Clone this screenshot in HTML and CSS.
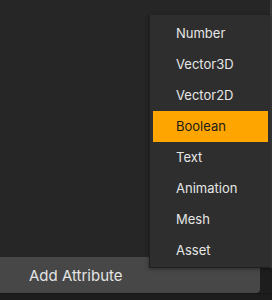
FILE: index.html
```html
<!DOCTYPE html>
<html lang="en">
<head>
<meta charset="UTF-8">
<meta name="viewport" content="width=device-width, initial-scale=1.0">
<title>Add Attribute</title>
<link rel="stylesheet" href="styles.css">
</head>
<body>

<div class="window">
  <div class="main">
    <div class="panel"></div>
    <div class="footer">
      <button class="add-btn">Add Attribute</button>
    </div>
  </div>
  <div class="edge"></div>
</div>

<ul class="menu">
  <li class="item">Number</li>
  <li class="item">Vector3D</li>
  <li class="item">Vector2D</li>
  <li class="item active">Boolean</li>
  <li class="item">Text</li>
  <li class="item">Animation</li>
  <li class="item">Mesh</li>
  <li class="item">Asset</li>
</ul>

</body>
</html>
```

FILE: styles.css
```css
body {
  margin: 0;
  width: 272px;
  height: 300px;
  overflow: hidden;
  background-color: #1d1d1d;
  font-family: Inter, "Noto Sans", sans-serif;
  position: relative;
}
.window {
  display: flex;
}
.main {
  width: 270px;
  display: flex;
  flex-direction: column;
}
.panel {
  height: 257px;
  background-color: #262626;
}
.footer {
  height: 36px;
  border-bottom: 1px solid #161616;
}
.add-btn {
  width: 260px;
  height: 36px;
  border: none;
  border-bottom-right-radius: 4px;
  background-color: #474747;
  color: #e4e4e4;
  font-family: inherit;
  font-size: 15px;
  text-align: left;
  padding: 0 0 0 29px;
  margin: 0;
}
.edge {
  width: 2px;
  height: 268px;
  background-color: #3a3a3a;
}
.menu {
  position: absolute;
  left: 149px;
  top: 15px;
  width: 121px;
  height: 253px;
  box-sizing: border-box;
  margin: 0;
  padding: 3px 2px 2px 3px;
  list-style: none;
  background-color: #2e2e2e;
  border-left: 1px solid #1f1f1f;
  border-bottom: 1px solid #1f1f1f;
  box-shadow: 0 1px 4px rgba(0, 0, 0, 0.4);
}
.item {
  height: 31px;
  line-height: 31px;
  padding-left: 23px;
  font-size: 13px;
  color: #e6e6e6;
}
.active {
  background-color: #ffa500;
  color: #1a1a1a;
}
```
